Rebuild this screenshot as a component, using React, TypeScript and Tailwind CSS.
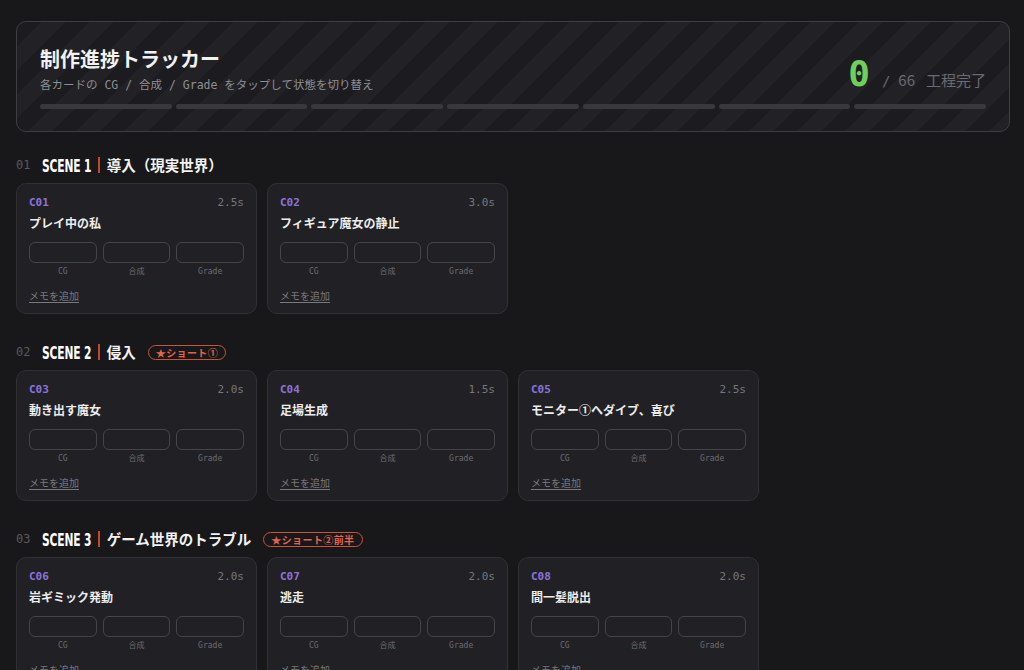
import React from 'react';

type Cut = { code: string; title: string; sec: string };
type Scene = { no: string; label: string; title: string; badge?: string; cuts: Cut[] };

const scenes: Scene[] = [
  {
    no: '01',
    label: 'SCENE 1',
    title: '導入（現実世界）',
    cuts: [
      { code: 'C01', title: 'プレイ中の私', sec: '2.5s' },
      { code: 'C02', title: 'フィギュア魔女の静止', sec: '3.0s' },
    ],
  },
  {
    no: '02',
    label: 'SCENE 2',
    title: '侵入',
    badge: '★ショート①',
    cuts: [
      { code: 'C03', title: '動き出す魔女', sec: '2.0s' },
      { code: 'C04', title: '足場生成', sec: '1.5s' },
      { code: 'C05', title: 'モニター①へダイブ、喜び', sec: '2.5s' },
    ],
  },
  {
    no: '03',
    label: 'SCENE 3',
    title: 'ゲーム世界のトラブル',
    badge: '★ショート②前半',
    cuts: [
      { code: 'C06', title: '岩ギミック発動', sec: '2.0s' },
      { code: 'C07', title: '逃走', sec: '2.0s' },
      { code: 'C08', title: '間一髪脱出', sec: '2.0s' },
    ],
  },
];

const mono = "font-['DejaVu_Sans_Mono','Noto_Sans_CJK_JP',monospace]";
const sans = "font-['Noto_Sans_CJK_JP','Noto_Sans',sans-serif]";

const CutCard = ({ cut }: { cut: Cut }) => {
  return (
    <div className="bg-[#212125] border border-[#303035] rounded-[10px] px-3 pt-3 pb-[10px]">
      <div className="flex items-center justify-between h-[15px]">
        <span className={`${mono} text-[11px] font-bold text-[#8d72d8]`}>{cut.code}</span>
        <span className={`${mono} text-[11px] text-[#76767c]`}>{cut.sec}</span>
      </div>
      <div className={`${sans} text-[12px] font-bold text-[#ececec] mt-[3px] leading-[18px]`}>{cut.title}</div>
      <div className="grid grid-cols-3 gap-[6px] mt-[10px]">
        {['CG', '合成', 'Grade'].map((s) => (
          <div key={s} className="flex flex-col items-center">
            <div className="w-full h-[21px] rounded-[6px] border-[1.5px] border-[#44444a]" />
            <span className={`${mono} text-[8px] leading-[12px] text-[#6c6c72] mt-[3px]`}>{s}</span>
          </div>
        ))}
      </div>
      <div className={`${sans} text-[10px] leading-[14px] text-[#77777d] underline underline-offset-2 mt-[11px]`}>
        メモを追加
      </div>
    </div>
  );
};

export default function App() {
  return (
    <div className={`min-h-screen bg-[#18181b] pl-4 pr-[14px] pt-[21px] pb-10 ${sans}`}>
      {/* ヘッダー */}
      <div className="border border-[#3d3d43] rounded-[10px] px-[23px] pt-[24px] pb-[22px] bg-[repeating-linear-gradient(135deg,#1c1c20_0px,#1c1c20_17px,#222226_17px,#222226_34px)]">
        <div className="flex items-end justify-between">
          <div>
            <h1 className="text-[20px] font-bold text-[#f2f2f2] leading-[26px]">制作進捗トラッカー</h1>
            <p className={`${mono} text-[11.5px] text-[#8e8e94] mt-[5px] leading-[16px]`}>
              各カードの CG / 合成 / Grade をタップして状態を切り替え
            </p>
          </div>
          <div className="flex items-baseline -mb-[1px]">
            <span className={`${mono} text-[36px] font-bold text-[#6fcf5c] leading-[40px]`}>0</span>
            <span className={`${mono} text-[14px] text-[#6a6a70] ml-[12px]`}>/</span>
            <span className="text-[15px] text-[#6a6a70] ml-[8px]">66</span>
            <span className="text-[15px] text-[#6a6a70] ml-[11px]">工程完了</span>
          </div>
        </div>
        <div className="grid grid-cols-7 gap-[4px] mt-[11px]">
          {Array.from({ length: 7 }).map((_, i) => (
            <div key={i} className="h-[5px] rounded-full bg-[#38383e]" />
          ))}
        </div>
      </div>

      {/* シーン */}
      {scenes.map((scene, i) => (
        <section key={scene.no} className={`${i === 0 ? 'mt-[23px]' : 'mt-6'} mb-7`}>
          <div className="flex items-center h-5 mb-2">
            <span className={`${mono} text-[12px] text-[#58585e] w-[26px]`}>{scene.no}</span>
            <span className="font-['DejaVu_Sans',sans-serif] [font-stretch:condensed] font-bold text-[18px] text-white inline-block origin-left scale-x-[0.66] -mr-[25px] tracking-[-0.2px]">
              {scene.label}
            </span>
            <span className="w-[2px] h-[16px] bg-[#c4472f] ml-[6px] mr-[7px]" />
            <span className="text-[14.5px] font-bold text-[#f2f2f2]">{scene.title}</span>
            {scene.badge && (
              <span className="ml-3 border border-[#c4553c] text-[#e2634b] rounded-full text-[10px] font-bold leading-[13px] px-[7px] tracking-[0.4px]">
                {scene.badge}
              </span>
            )}
          </div>
          <div className="grid grid-cols-4 gap-[10px]">
            {scene.cuts.map((cut) => (
              <CutCard key={cut.code} cut={cut} />
            ))}
          </div>
        </section>
      ))}
    </div>
  );
}
